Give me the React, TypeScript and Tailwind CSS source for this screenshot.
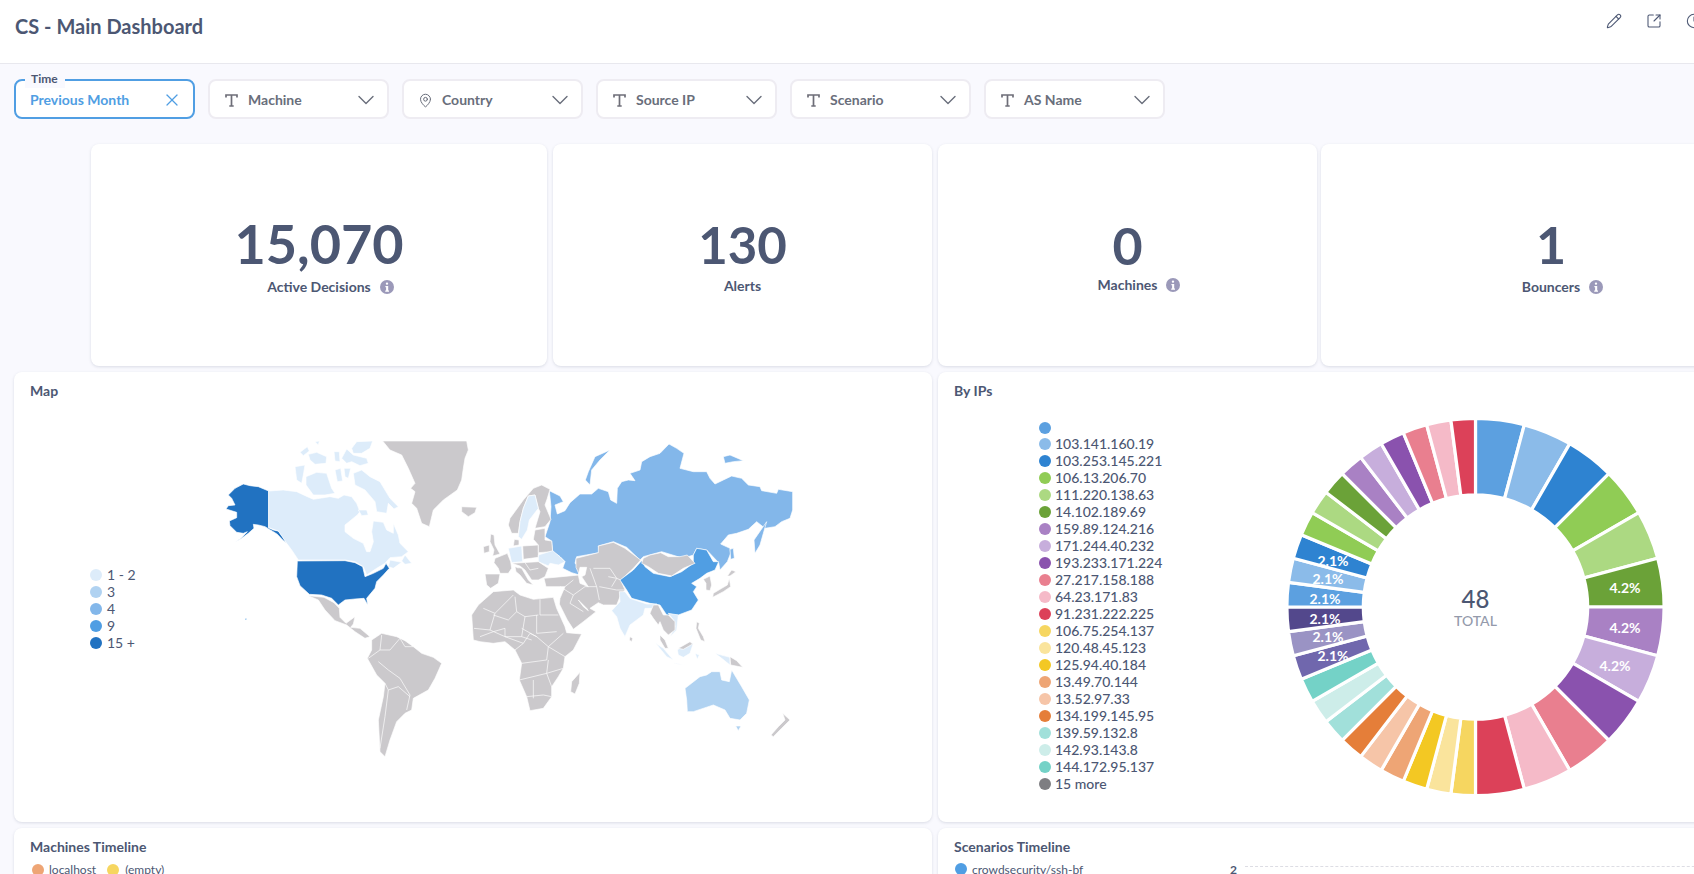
import { ChevronDown, Clock, MapPin, Pencil, SquareArrowOutUpRight, X } from "lucide-react";

const GRAY = "#cbc9cc";
const L1 = "#ddecfa";
const L2 = "#b0d2f1";
const L3 = "#83b7ea";
const L4 = "#509ee3";
const L5 = "#2172c1";

type Shape = [string, string];

// North America, traced from a crop at (220,435) x3
const northAmerica: Shape[] = [
  [L5, "M70,147 L90,152 L115,155 L146,168 L146,278 L160,285 L175,288 L188,305 L200,325 L188,315 L172,298 L160,290 L135,275 L115,270 L100,268 L102,280 L85,295 L65,310 L45,322 L65,308 L82,290 L70,295 L50,292 L30,272 L28,258 L50,248 L50,232 L18,222 L25,212 L45,210 L35,190 L25,180 L45,160 Z"],
  [L1, "M146,168 L190,165 L230,170 L262,185 L280,193 L330,185 L355,190 L372,180 L395,185 L410,205 L420,230 L412,240 L375,270 L375,290 L400,310 L430,325 L440,350 L450,350 L460,320 L455,290 L460,258 L490,262 L500,285 L520,295 L520,265 L535,300 L540,325 L565,350 L545,365 L510,368 L495,385 L470,400 L440,420 L430,395 L405,380 L375,375 L235,375 L215,345 L200,325 L175,288 L146,278 Z"],
  [L1, "M415,225 L440,225 L445,240 L425,242 Z"],
  [L1, "M400,115 L425,105 L450,125 L480,140 L510,190 L535,215 L522,222 L505,205 L500,235 L470,230 L465,200 L435,165 L405,150 Z"],
  [L1, "M225,95 L255,90 L250,120 L245,145 L230,135 Z"],
  [L1, "M258,125 L290,112 L320,115 L335,160 L345,175 L315,180 L280,180 L258,150 Z"],
  [L1, "M240,52 L262,35 L268,48 L250,62 Z"],
  [L1, "M265,58 L290,52 L320,65 L318,85 L285,88 L270,75 Z"],
  [L1, "M285,20 L298,18 L295,30 Z"],
  [L1, "M342,50 L358,50 L360,80 L345,78 Z"],
  [L1, "M395,40 L410,20 L458,18 L450,40 L425,55 L400,55 Z"],
  [L1, "M365,70 L380,42 L400,60 L440,70 L445,85 L420,92 L395,80 L380,85 Z"],
  [L1, "M345,105 L362,100 L368,138 L352,140 Z"],
  [L1, "M372,100 L392,100 L385,130 L375,125 Z"],
  [L1, "M555,360 L575,385 L555,388 L545,378 Z"],
  [L1, "M510,375 L545,382 L520,400 L505,395 Z"],
  [L5, "M232,378 L375,377 L405,383 L428,395 L435,425 L460,415 L490,400 L498,385 L508,400 L490,420 L470,440 L465,460 L440,490 L443,510 L432,490 L405,492 L375,495 L355,510 L335,490 L305,480 L268,478 L240,452 L230,425 Z"],
  [GRAY, "M488,18 L740,18 L745,45 L735,70 L730,100 L725,135 L712,165 L670,195 L640,225 L628,275 L605,265 L590,220 L575,205 L585,170 L572,160 L585,145 L565,100 L545,60 L510,45 Z"],
];

// central and south America, crop at (60,420) x3
const southAmerica: Shape[] = [
  [GRAY, "M1205,260 L1250,262 L1245,278 L1225,290 L1205,275 Z"],
  [GRAY, "M745,527 L792,532 L822,548 L838,565 L840,592 L858,610 L885,590 L880,612 L872,622 L900,625 L930,650 L915,655 L885,635 L860,615 L825,602 L795,570 L775,540 Z"],
  [GRAY, "M935,660 L965,640 L1010,650 L1035,662 L1060,680 L1085,700 L1120,712 L1145,730 L1125,775 L1105,810 L1060,835 L1055,870 L1035,880 L1010,905 L990,960 L975,1010 L985,1020 L960,995 L955,900 L970,830 L975,790 L950,765 L922,715 L935,690 Z"],
  [L4, "M555,595 L560,595 L560,600 L555,600 Z"],
];

const southBorders = [
  "M925,715 L960,690 L965,645",
  "M960,690 L990,690 L1020,655",
  "M1020,655 L1035,680 L1060,680",
  "M955,725 L985,750 L1020,775 L1050,825 L1040,870",
  "M975,790 L985,810 L1015,800 L1050,830",
  "M985,810 L975,890 L960,985",
];

// rest of the eastern half, crop at (480,420) x3
const russia: Shape[] = [
  [L3, "M208,212 L240,228 L250,245 L225,255 L232,282 L255,272 L270,248 L300,222 L335,222 L355,205 L385,215 L392,240 L410,250 L412,205 L425,185 L445,180 L465,182 L450,160 L480,150 L485,125 L510,110 L540,100 L567,72 L590,85 L612,100 L600,145 L640,155 L680,155 L690,175 L705,192 L730,180 L755,168 L785,175 L805,195 L840,200 L845,212 L890,220 L895,208 L938,215 L938,270 L930,295 L905,305 L885,320 L855,325 L830,305 L805,328 L770,340 L745,345 L722,372 L750,385 L752,400 L742,425 L720,450 L716,428 L680,390 L650,385 L640,405 L610,415 L545,395 L490,410 L480,420 L440,382 L400,365 L355,378 L358,398 L290,410 L285,430 L305,445 L298,465 L275,458 L248,445 L255,425 L240,410 L218,395 L215,363 L195,350 L210,305 L213,260 Z"],
  [L3, "M750,388 L760,385 L763,415 L752,418 Z"],
  [L3, "M390,90 L345,110 L325,155 L316,180 L330,195 L335,150 L360,120 Z"],
  [L3, "M730,110 L750,105 L790,122 L760,125 L735,130 Z"],
];

// Europe, Africa and the Middle East, crop at (470,480) x3
const europe: Shape[] = [
  [GRAY, "M5,405 L25,375 L70,335 L130,330 L150,345 L190,358 L250,352 L260,385 L285,440 L290,458 L335,462 L310,510 L285,530 L280,565 L265,590 L245,620 L245,650 L220,685 L180,692 L170,650 L148,600 L155,550 L135,510 L105,485 L70,490 L30,485 L10,480 Z"],
  [GRAY, "M115,135 L120,115 L160,60 L190,25 L215,15 L240,28 L232,55 L225,75 L243,118 L225,140 L195,145 L210,95 L205,85 L195,45 L175,48 L160,85 L150,125 L145,160 L125,160 Z"],
  [L1, "M175,48 L195,45 L205,85 L178,120 L172,150 L155,178 L145,170 L150,125 L160,85 Z"],
  [GRAY, "M133,178 L147,180 L147,195 L130,198 Z"],
  [GRAY, "M62,162 L72,165 L75,195 L90,222 L68,228 L72,210 L60,185 Z"],
  [GRAY, "M40,200 L58,195 L58,215 L42,220 Z"],
  [GRAY, "M75,235 L112,220 L122,245 L125,265 L115,280 L90,280 L85,265 L72,248 Z"],
  [GRAY, "M45,282 L90,282 L85,310 L62,325 L50,315 Z"],
  [L1, "M115,205 L155,198 L158,245 L125,248 Z"],
  [GRAY, "M158,198 L205,195 L205,232 L160,238 Z"],
  [GRAY, "M195,150 L225,145 L225,180 L245,183 L248,215 L205,218 L205,195 L190,178 Z"],
  [L1, "M205,225 L248,212 L270,230 L285,245 L265,255 L240,250 L235,258 L205,245 Z"],
  [GRAY, "M125,250 L205,245 L235,265 L225,290 L205,300 L185,300 L165,270 L150,258 Z"],
  [GRAY, "M135,260 L155,265 L175,300 L190,315 L170,310 L150,285 L138,275 Z"],
  [GRAY, "M222,295 L275,290 L328,285 L318,262 L318,235 L385,218 L385,198 L430,187 L465,205 L512,240 L490,265 L452,300 L465,330 L450,350 L440,375 L400,375 L385,368 L360,385 L378,395 L340,425 L310,448 L292,420 L268,372 L270,355 L285,320 L228,320 Z"],
  ["#ffffff", "M330,262 L350,262 L345,285 L335,290 L355,320 L330,310 L325,285 Z"],
  ["#ffffff", "M325,360 L350,385 L355,392 L340,380 Z"],
];

const europeBorders = [
  "M40,385 L75,400 L130,345",
  "M135,350 L140,395 L115,420 L70,405",
  "M210,358 L210,405 L265,405",
  "M140,395 L165,410 L205,405",
  "M165,410 L155,470 L185,480",
  "M200,405 L200,460 L260,455",
  "M75,400 L60,450 L105,470 L155,470",
  "M12,445 L60,450",
  "M370,265 L420,265 L440,295 L452,300",
  "M360,265 L380,320 L388,360",
  "M388,320 L440,330 L465,330",
  "M310,345 L345,320 L380,320",
  "M270,320 L310,345 L300,370 L340,395",
  "M285,320 L310,300",
  "M165,248 L180,270 L205,265",
  "M125,250 L145,265",
  "M415,290 L440,295 L425,320",
];

const eastAsia: Shape[] = [
  [L4, "M420,480 L460,450 L485,422 L495,440 L520,460 L570,470 L605,455 L640,430 L640,405 L650,385 L680,390 L700,425 L716,425 L705,450 L680,460 L660,475 L635,490 L650,500 L640,515 L655,540 L635,570 L595,585 L560,585 L540,555 L510,550 L455,535 L440,510 Z"],
  [GRAY, "M490,415 L510,405 L542,398 L565,410 L600,410 L622,405 L645,430 L610,445 L575,468 L535,460 L505,440 L485,430 Z"],
  [L1, "M395,572 L420,545 L418,515 L435,515 L450,535 L500,552 L530,552 L515,565 L495,565 L490,585 L450,615 L435,650 L420,625 L410,590 Z"],
  [GRAY, "M450,650 L458,655 L455,665 L448,660 Z"],
  [L2, "M615,805 L660,770 L680,765 L695,755 L720,755 L725,780 L748,785 L755,750 L785,800 L808,840 L800,880 L780,900 L750,895 L735,870 L700,855 L640,875 L622,875 L620,840 Z"],
  [L2, "M767,918 L783,918 L775,932 Z"],
  [GRAY, "M908,880 L930,900 L905,925 L880,950 L873,945 L895,920 L915,900 Z"],
  [GRAY, "M300,757 L298,790 L285,822 L272,815 L275,785 Z"],
  [L3, "M822,360 L860,305 L850,340 L840,375 L825,400 Z"],
];

const africaBorders = [
  "M0,650 L40,635 L75,625 L75,650",
  "M75,650 L130,670 L150,640 L170,650",
  "M125,625 L170,650 L205,680 L250,640",
  "M125,730 L200,720 L205,680 L255,710",
  "M205,720 L200,760 L250,745",
  "M118,780 L200,760 L215,800",
  "M140,830 L190,825 L215,830",
  "M160,780 L160,835",
  "M105,690 L130,670",
];

// Korea, Japan and south-east Asia, crop at (640,540) x3
const farEast: Shape[] = [
  [GRAY, "M190,118 L210,108 L215,135 L210,152 L198,150 L198,130 Z"],
  [GRAY, "M275,90 L288,95 L270,108 L262,108 Z"],
  [GRAY, "M268,115 L272,140 L250,155 L218,172 L220,160 L245,145 L262,135 Z"],
  [L1, "M85,220 L115,225 L110,270 L90,290 L105,260 L100,240 Z"],
  [GRAY, "M30,220 L40,195 L55,195 L70,225 L85,225 L105,245 L105,270 L85,285 L70,270 L60,245 L55,255 L40,235 Z"],
  [GRAY, "M60,285 L75,300 L85,325 L75,325 L60,300 Z"],
  [L1, "M47,310 L70,325 L100,360 L80,350 Z"],
  [L1, "M112,330 L125,320 L160,310 L150,340 L130,352 L115,345 Z"],
  [GRAY, "M115,325 L150,305 L158,312 L130,328 Z"],
  [L1, "M165,340 L178,345 L172,358 Z"],
  [L1, "M100,368 L135,375 L110,372 Z"],
  [L1, "M225,340 L270,352 L270,375 L245,355 Z"],
  [GRAY, "M270,350 L290,362 L308,382 L272,375 Z"],
  [GRAY, "M170,245 L178,250 L175,265 L190,290 L195,305 L182,300 L168,265 Z"],
];

const ipRows: [string, string][] = [
  ["#5ca0e0", ""],
  ["#8bbbe9", "103.141.160.19"],
  ["#2e83d1", "103.253.145.221"],
  ["#90cc55", "106.13.206.70"],
  ["#acd982", "111.220.138.63"],
  ["#6ba238", "14.102.189.69"],
  ["#a981c4", "159.89.124.216"],
  ["#c7aedc", "171.244.40.232"],
  ["#8a52ae", "193.233.171.224"],
  ["#e97f8f", "27.217.158.188"],
  ["#f5bac8", "64.23.171.83"],
  ["#dc4159", "91.231.222.225"],
  ["#f6d660", "106.75.254.137"],
  ["#fae49c", "120.48.45.123"],
  ["#f3c823", "125.94.40.184"],
  ["#eea575", "13.49.70.144"],
  ["#f6c5a8", "13.52.97.33"],
  ["#e57e39", "134.199.145.95"],
  ["#a1e0da", "139.59.132.8"],
  ["#cdede9", "142.93.143.8"],
  ["#74d2c7", "144.172.95.137"],
  ["#7e7e82", "15 more"],
];

const big = ipRows.slice(0, 12).map((r) => r[0]);
const small = [
  ...ipRows.slice(12, 21).map((r) => r[0]),
  "#7067ad",
  "#9a93c4",
  "#53488c",
  ...big,
];

function arc(start: number, end: number) {
  const cx = 190.5;
  const cy = 191;
  const R = 188.6;
  const r = 112.2;
  const pt = (rad: number, a: number) => `${cx + rad * Math.cos(a)},${cy + rad * Math.sin(a)}`;
  return `M${pt(R, start)} A${R},${R} 0 0 1 ${pt(R, end)} L${pt(r, end)} A${r},${r} 0 0 0 ${pt(r, start)} Z`;
}

function Donut() {
  let angle = -Math.PI / 2;
  const slices = [
    ...big.map((c) => ({ c, span: (2 / 48) * Math.PI * 2 })),
    ...small.map((c) => ({ c, span: (1 / 48) * Math.PI * 2 })),
  ].map((s) => {
    const d = arc(angle, angle + s.span);
    angle += s.span;
    return { c: s.c, d };
  });
  const labels: [number, number, string][] = [
    [340, 177, "4.2%"],
    [340, 217, "4.2%"],
    [330, 255, "4.2%"],
    [48, 150, "2.1%"],
    [43, 168, "2.1%"],
    [40, 188, "2.1%"],
    [40, 208, "2.1%"],
    [43, 226, "2.1%"],
    [48, 245, "2.1%"],
  ];
  return (
    <svg width="382" height="382" viewBox="0 0 382 382" className="mt-[15px] shrink-0">
      {slices.map((s, i) => (
        <path key={i} d={s.d} fill={s.c} stroke="#ffffff" strokeWidth="3.2" />
      ))}
      {labels.map(([x, y, t], i) => (
        <text key={i} x={x} y={y} textAnchor="middle" fontSize="14" fontWeight="700" fill="#ffffff">
          {t}
        </text>
      ))}
      <text x="190.5" y="192" textAnchor="middle" fontSize="24" fontWeight="500" fill="#4c5773">
        48
      </text>
      <text x="190.5" y="210" textAnchor="middle" fontSize="14" fontWeight="500" fill="#949aab">
        TOTAL
      </text>
    </svg>
  );
}

function Layer({ at, shapes, lines }: { at: string; shapes: Shape[]; lines?: string[] }) {
  return (
    <g transform={`translate(${at}) scale(0.33333)`} stroke="#ffffff" strokeWidth="2">
      {shapes.map(([c, d], i) => (
        <path key={i} d={d} fill={c} />
      ))}
      {lines?.map((d, i) => (
        <path key={i} d={d} fill="none" />
      ))}
    </g>
  );
}

function WorldMap() {
  return (
    <svg width="600" height="330" viewBox="200 440 600 330" className="mt-[39px] shrink-0">
      <Layer at="220 435" shapes={northAmerica} />
      <Layer at="60 420" shapes={southAmerica} lines={southBorders} />
      <Layer at="480 420" shapes={russia} />
      <Layer at="470 480" shapes={europe} lines={europeBorders} />
      <Layer at="480 420" shapes={eastAsia} lines={africaBorders} />
      <Layer at="640 540" shapes={farEast} />
    </svg>
  );
}

function TextIcon() {
  return (
    <svg width="13" height="13" viewBox="0 0 13 13" fill="none" stroke="#6e6e78" strokeWidth="1.7" className="shrink-0">
      <path d="M1 3.4V1h11v2.4M6.5 1v11M4.3 12h4.4" />
    </svg>
  );
}

function InfoDot() {
  return (
    <svg width="14" height="14" viewBox="0 0 14 14" className="absolute left-full top-[3px] ml-[9px]">
      <circle cx="7" cy="7" r="7" fill="#9b99b9" />
      <path fill="#ffffff" d="M7 2.4a1.2 1.2 0 1 1 0 2.4 1.2 1.2 0 0 1 0-2.4zM5.4 6h2.8v4.4h.8v1.3H5.2v-1.3h.9V7.3h-.7z" />
    </svg>
  );
}

function FilterBox({ label, pin }: { label: string; pin?: boolean }) {
  return (
    <div className="flex h-[40px] w-[181px] items-center rounded-lg border-2 border-[#eeecf2] bg-white pl-[15px] pt-[2px] text-sm font-bold text-[#696e7b]">
      {pin ? <MapPin size={15} strokeWidth={1.6} className="mx-[-1px] shrink-0" /> : <TextIcon />}
      <span className="ml-[10px]">{label}</span>
      <ChevronDown size={28} strokeWidth={1.2} className="ml-auto mr-[7px]" />
    </div>
  );
}

function Stat({
  value,
  label,
  info,
  size,
  width,
  lift,
}: {
  value: string;
  label: string;
  info?: boolean;
  size: string;
  width: string;
  lift: string;
}) {
  return (
    <div className={`flex h-[222px] shrink-0 flex-col items-center justify-center rounded-lg bg-white shadow-[0_1px_3px_rgba(76,87,115,0.18)] ${width}`}>
      <div className={`h-[60px] font-bold leading-[60px] text-[#4c5773] ${size}`}>{value}</div>
      <div className={`relative text-sm font-bold leading-5 text-[#4c5773] ${lift}`}>
        {label}
        {info && <InfoDot />}
      </div>
    </div>
  );
}

export default function App() {
  return (
    <div className="h-screen w-screen overflow-hidden bg-[#f9f9fe] font-[family-name:Lato,sans-serif] text-[#4c5773]">
      {/* Header */}
      <div className="flex h-[64px] border-b border-[#e8e8ee] bg-white pl-[15px]">
        <h1 className="mt-[11px] text-[20px] font-bold leading-[30px]">CS - Main Dashboard</h1>
        <div className="ml-auto mr-[-8px] mt-[13px] flex h-[16px] gap-[24px]">
          <Pencil size={16} strokeWidth={1.6} />
          <SquareArrowOutUpRight size={16} strokeWidth={1.6} />
          <Clock size={16} strokeWidth={1.6} />
        </div>
      </div>

      {/* Filters */}
      <div className="flex gap-[13px] pl-[14px] pt-[15px]">
        <div className="relative flex h-[40px] w-[181px] items-center rounded-lg border-2 border-[#509ee3] bg-white pl-[14px] pt-[2px] text-sm font-bold text-[#509ee3]">
          <span className="absolute left-[9px] top-[-11px] bg-[#f9f9fe] pl-[6px] pr-[7px] text-xs leading-[18px] text-[#4c5773]">Time</span>
          Previous Month
          <X size={20} strokeWidth={1.5} className="ml-auto mr-[11px]" />
        </div>
        <FilterBox label="Machine" />
        <FilterBox label="Country" pin />
        <FilterBox label="Source IP" />
        <FilterBox label="Scenario" />
        <FilterBox label="AS Name" />
      </div>

      {/* Scalars */}
      <div className="mt-[25px] flex gap-[6px] pl-[91px]">
        <Stat value="15,070" label="Active Decisions" info size="text-[54px]" width="w-[456px]" lift="mt-[3px]" />
        <Stat value="130" label="Alerts" size="text-[51px]" width="w-[379px]" lift="mt-[1px]" />
        <Stat value="0" label="Machines" info size="text-[52px]" width="w-[379px] mr-[-2px]" lift="mt-0" />
        <Stat value="1" label="Bouncers" info size="text-[52px]" width="w-[460px]" lift="mt-[3px]" />
      </div>

      {/* Map + IPs */}
      <div className="mt-[6px] flex gap-[6px] pl-[14px]">
        <div className="flex h-[450px] w-[918px] shrink-0 flex-col rounded-lg bg-white shadow-[0_1px_3px_rgba(76,87,115,0.18)]">
          <div className="pl-[16px] pt-[9px] text-sm font-bold leading-5">Map</div>
          <div className="flex">
            <div className="ml-[76px] mt-[165px] w-[110px] shrink-0 text-sm leading-[17px]">
              {[[L1, "1 - 2"], [L2, "3"], [L3, "4"], [L4, "9"], [L5, "15 +"]].map(([c, t]) => (
                <div key={t} className="flex h-[17px] items-center gap-[5px]">
                  <span className="h-[12px] w-[12px] rounded-full" style={{ backgroundColor: c }} />
                  {t}
                </div>
              ))}
            </div>
            <WorldMap />
          </div>
        </div>
        <div className="flex h-[450px] w-[860px] shrink-0 flex-col rounded-lg bg-white shadow-[0_1px_3px_rgba(76,87,115,0.18)]">
          <div className="pl-[16px] pt-[9px] text-sm font-bold leading-5">By IPs</div>
          <div className="flex">
            <div className="ml-[101px] mt-[20px] w-[246px] shrink-0 text-sm font-medium leading-[17px]">
              {ipRows.map(([c, t], i) => (
                <div key={i} className={`flex items-center gap-[4px] ${i === 0 ? "h-[14px]" : "h-[17px]"}`}>
                  <span className="h-[12px] w-[12px] rounded-full" style={{ backgroundColor: c }} />
                  {t}
                </div>
              ))}
            </div>
            <Donut />
          </div>
        </div>
      </div>

      {/* Timelines */}
      <div className="mt-[6px] flex gap-[6px] pl-[14px]">
        <div className="h-[200px] w-[918px] shrink-0 rounded-lg bg-white pl-[16px] pt-[9px] shadow-[0_1px_3px_rgba(76,87,115,0.18)]">
          <div className="text-sm font-bold leading-5">Machines Timeline</div>
          <div className="mt-[6px] flex items-center pl-[2px] text-xs leading-[14px]">
            <span className="h-[12px] w-[12px] rounded-full bg-[#eea575]" />
            <span className="ml-[5px]">localhost</span>
            <span className="ml-[11px] h-[12px] w-[12px] rounded-full bg-[#f6d660]" />
            <span className="ml-[6px]">(empty)</span>
          </div>
        </div>
        <div className="h-[200px] w-[860px] shrink-0 rounded-lg bg-white pl-[16px] pt-[9px] shadow-[0_1px_3px_rgba(76,87,115,0.18)]">
          <div className="text-sm font-bold leading-5">Scenarios Timeline</div>
          <div className="mt-[6px] flex items-start pl-[1px] text-xs leading-[14px]">
            <span className="h-[12px] w-[12px] rounded-full bg-[#509ee3]" />
            <span className="ml-[5px] w-[258px] shrink-0">crowdsecurity/ssh-bf</span>
            <span className="font-bold">2</span>
            <span className="ml-[8px] mt-[3px] w-[500px] border-t border-dashed border-[#dddde4]" />
          </div>
        </div>
      </div>
    </div>
  );
}
